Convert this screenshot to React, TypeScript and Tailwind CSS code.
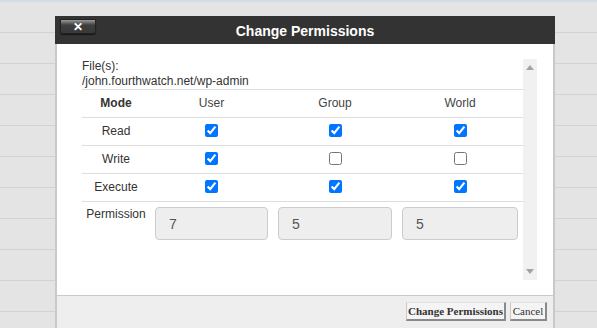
import React from "react";

const rows = ["Read", "Write", "Execute"];
const checks: boolean[][] = [
  [true, true, true],
  [true, false, false],
  [true, true, true],
];
const perms = ["7", "5", "5"];

function Cell({ children, className = "" }: { children: React.ReactNode; className?: string }) {
  return <div className={`flex h-[28px] items-center justify-center border-b border-[#dddddd] ${className}`}>{children}</div>;
}

export default function App() {
  return (
    <div className="relative h-[328px] w-[597px] overflow-hidden bg-[#e4e4e4] font-['Liberation_Sans',Arial,sans-serif]">
      <div className="h-[2px] bg-[#d4dde4]" />
      {Array.from({ length: 11 }).map((_, i) => (
        <div key={i} className="h-[31px] border-b border-[#d2d2d2]" />
      ))}

      <div className="absolute left-[55px] top-[16px] w-[500px]">
        <div className="relative flex h-[28px] items-center justify-center bg-[#333333] text-[14px] font-bold text-white">
          <button className="absolute left-[5px] top-[3px] flex h-[15px] w-[36px] items-center justify-center rounded-b-[3px] border border-[#222] bg-gradient-to-b from-[#9a9a9a] via-[#3e3e3e] via-40% to-[#383838] text-[12px] font-bold leading-none text-white shadow-[0_1px_1px_rgba(0,0,0,0.6)]">
            ✕
          </button>
          <span className="mt-[2px]">Change Permissions</span>
        </div>

        <div className="flex h-[251px] border-x-2 border-[#c9c9c9] bg-white pb-[15px] pl-[25px] pr-[14px] pt-[15px]">
          <div className="w-[441px] text-[12px] leading-[15px] text-[#333]">
            <div>File(s):</div>
            <div>/john.fourthwatch.net/wp-admin</div>
            <div className="grid grid-cols-[68px_123px_124px_126px] border-t border-[#dddddd]">
              <Cell className="font-bold text-[#333]">Mode</Cell>
              <Cell className="text-[#444]">User</Cell>
              <Cell className="text-[#444]">Group</Cell>
              <Cell className="text-[#444]">World</Cell>
              {rows.map((r, ri) => (
                <React.Fragment key={r}>
                  <Cell>{r}</Cell>
                  {checks[ri].map((c, ci) => (
                    <Cell key={ci}>
                      <input type="checkbox" defaultChecked={c} className="mb-[3px] h-[13px] w-[13px]" />
                    </Cell>
                  ))}
                </React.Fragment>
              ))}
              <div className="pt-[5px] text-center">Permission</div>
              {perms.map((p, i) => (
                <div key={i} className="px-[5px] pt-[5px]">
                  <input
                    readOnly
                    value={p}
                    className="h-[33px] w-full rounded-[4px] border border-[#cccccc] bg-[#eeeeee] pl-[13px] text-[14px] text-[#555]"
                  />
                </div>
              ))}
            </div>
          </div>
          <div className="flex h-[221px] w-[14px] flex-col items-center justify-between bg-[#f1f1f1] py-[6px]">
            <svg width="8" height="5" viewBox="0 0 8 5"><path d="M0 5 L4 0 L8 5 Z" fill="#a3a3a3" /></svg>
            <svg width="8" height="5" viewBox="0 0 8 5"><path d="M0 0 L8 0 L4 5 Z" fill="#a3a3a3" /></svg>
          </div>
        </div>

        <div className="flex h-[40px] items-start justify-end gap-[4px] border-x-2 border-t border-[#c9c9c9] bg-[#eeeeee] pr-[6px] pt-[6px] font-['Liberation_Serif','Times_New_Roman',serif] text-[11px] text-[#333]">
          <button className="h-[19px] w-[100px] border-l border-t border-b-2 border-r-2 border-l-[#c8c8c8] border-t-[#e0e0e0] border-b-[#8a8a8a] border-r-[#8a8a8a] bg-[#f4f4f4] font-bold">
            Change Permissions
          </button>
          <button className="h-[19px] w-[37px] border-l border-t border-b-2 border-r-2 border-l-[#c8c8c8] border-t-[#e0e0e0] border-b-[#8a8a8a] border-r-[#8a8a8a] bg-[#f4f4f4]">
            Cancel
          </button>
        </div>
      </div>
    </div>
  );
}
